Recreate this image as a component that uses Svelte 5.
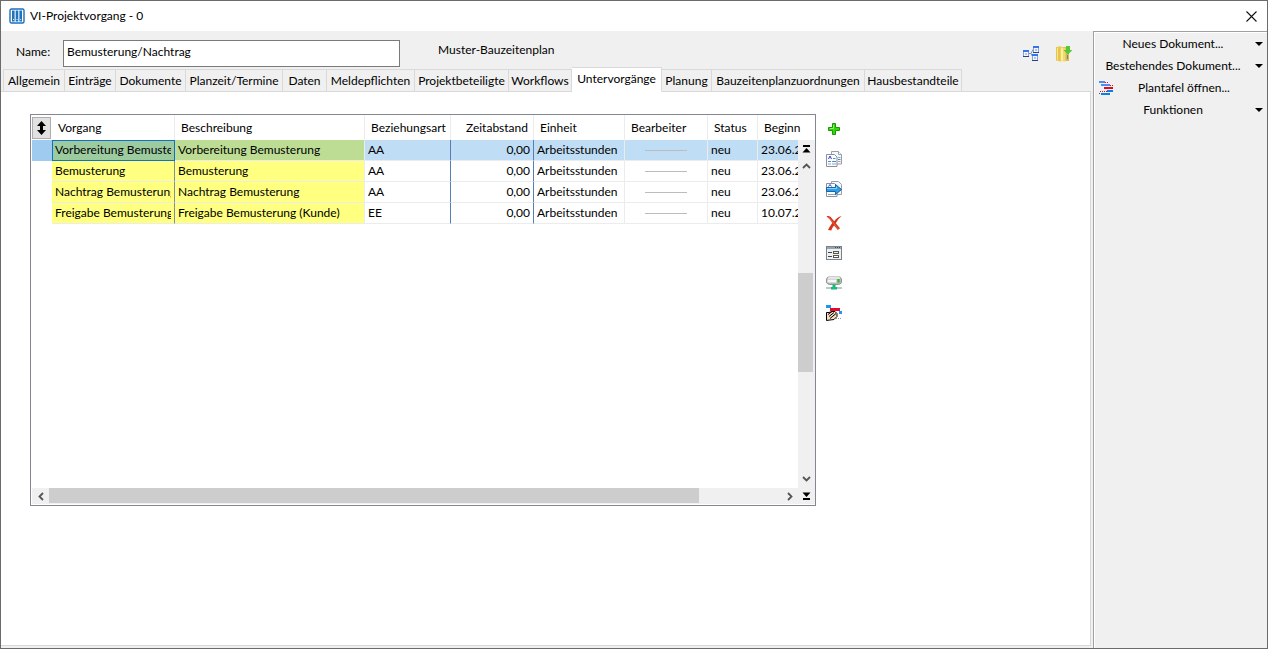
<script lang="ts">
  interface Tab {
    label: string;
    width: number;
  }

  interface Vorgang {
    vorgang: string;
    beschreibung: string;
    art: string;
    abstand: string;
    einheit: string;
    status: string;
    beginn: string;
  }

  const tabs: Tab[] = [
    { label: 'Allgemein', width: 62 },
    { label: 'Einträge', width: 51 },
    { label: 'Dokumente', width: 70 },
    { label: 'Planzeit/Termine', width: 97 },
    { label: 'Daten', width: 44 },
    { label: 'Meldepflichten', width: 88 },
    { label: 'Projektbeteiligte', width: 94 },
    { label: 'Workflows', width: 63 },
    { label: 'Untervorgänge', width: 90 },
    { label: 'Planung', width: 50 },
    { label: 'Bauzeitenplanzuordnungen', width: 153 },
    { label: 'Hausbestandteile', width: 97 },
  ];

  const rows: Vorgang[] = [
    { vorgang: 'Vorbereitung Bemusterung', beschreibung: 'Vorbereitung Bemusterung', art: 'AA', abstand: '0,00', einheit: 'Arbeitsstunden', status: 'neu', beginn: '23.06.2020' },
    { vorgang: 'Bemusterung', beschreibung: 'Bemusterung', art: 'AA', abstand: '0,00', einheit: 'Arbeitsstunden', status: 'neu', beginn: '23.06.2020' },
    { vorgang: 'Nachtrag Bemusterung', beschreibung: 'Nachtrag Bemusterung', art: 'AA', abstand: '0,00', einheit: 'Arbeitsstunden', status: 'neu', beginn: '23.06.2020' },
    { vorgang: 'Freigabe Bemusterung', beschreibung: 'Freigabe Bemusterung (Kunde)', art: 'EE', abstand: '0,00', einheit: 'Arbeitsstunden', status: 'neu', beginn: '10.07.2020' },
  ];

  let name = $state('Bemusterung/Nachtrag');
  let activeTab = $state('Untervorgänge');
  let selected = $state(0);
</script>

<div class="window">
  <header class="titlebar">
    <svg width="16" height="16" viewBox="0 0 16 16">
      <rect x="1" y="1" width="14" height="14" rx="1.5" fill="#fff" stroke="#1c6fb8" stroke-width="1.4" />
      <path d="M3 2.5h2.6v11H3zM6.7 2.5h2.6v11H6.7zM10.4 2.5H13v11h-2.600z" fill="#1c75bc" />
      <path d="M4 11h.8v1H4zM7.600 11h.8v1h-.8zM11.300 11h.8v1h-.8z" fill="#fff" />
    </svg>
    <h1>VI-Projektvorgang - 0</h1>
    <button class="close" aria-label="Schließen">
      <svg width="11" height="11" viewBox="0 0 11 11"><path d="M.5.5l10 10M10.500.5l-10 10" stroke="#111" stroke-width="1.100" /></svg>
    </button>
  </header>

  <div class="content">
    <main>
      <div class="head">
        <label for="name">Name:</label>
        <input id="name" type="text" bind:value={name} />
        <span class="plan">Muster-Bauzeitenplan</span>
        <div class="head-actions">
          <button aria-label="Struktur">
            <svg width="16" height="16" viewBox="0 0 16 16">
              <path d="M5 7.500h3M8 7.500l2-4M8 7.500l2 4" stroke="#7d93bd" fill="none" />
              {#each [[0, 4], [10, 0], [9, 8]] as [x, y] (y)}
                <rect x={x + 0.5} y={y + 0.5} width="5" height="6" fill="#f2f6ff" stroke="#7fa0e4" />
                <path d="M{x} {y + 1}h6" stroke="#3a72e8" stroke-width="2" />
                <path d="M{x} {y + 6.5}h6" stroke="#2c4474" />
                <path d="M{x + 2} {y + 4}h2" stroke="#6f90dc" />
              {/each}
            </svg>
          </button>
          <button aria-label="Ablegen">
            <svg width="16" height="16" viewBox="0 0 16 16">
              <path d="M0 1l5-.8V15.500l-5-1z" fill="#e6c648" />
              <path d="M1.500 1.500v12.500" stroke="#f8e690" />
              <path d="M5 1h8v14H5z" fill="#e0bb3e" />
              <path d="M4.500 1l5 1v13.500l-5-.5z" fill="#f1d96f" />
              <path d="M6 2.500v12" stroke="#fff3b8" stroke-width="1.500" />
              <path d="M10 0h4v4h2.500L12 8.500 7.500 4H10z" fill="#55c83a" />
              <path d="M11.500 9v4" stroke="#3f91b8" />
            </svg>
          </button>
        </div>
      </div>

      <div class="tabs" role="tablist">
        {#each tabs as tab (tab.label)}
          <button
            role="tab"
            class="tab"
            class:active={tab.label === activeTab}
            aria-selected={tab.label === activeTab}
            style:width="{tab.width}px"
            onclick={() => (activeTab = tab.label)}
          >{tab.label}</button>
        {/each}
      </div>

      <section class="panel">
        <div class="grid">
          <table>
            <colgroup>
              <col class="c-sel" />
              <col class="c-vorgang" />
              <col class="c-beschreibung" />
              <col class="c-art" />
              <col class="c-abstand" />
              <col class="c-einheit" />
              <col class="c-bearbeiter" />
              <col class="c-status" />
              <col />
            </colgroup>
            <thead>
              <tr>
                <th class="sel">
                  <button class="sort" aria-label="Sortieren">
                    <svg width="9" height="14" viewBox="0 0 9 14"><path d="M4.500 0L9 5H6v4h3l-4.500 5L0 9h3V5H0z" fill="#000" /></svg>
                  </button>
                </th>
                <th>Vorgang</th>
                <th>Beschreibung</th>
                <th>Beziehungsart</th>
                <th class="num">Zeitabstand</th>
                <th>Einheit</th>
                <th>Bearbeiter</th>
                <th>Status</th>
                <th>Beginn</th>
              </tr>
            </thead>
            <tbody>
              {#each rows as row, i (i)}
                <tr class:selected={i === selected} onclick={() => (selected = i)}>
                  <td class="sel"></td>
                  <td class="key"><div class="clip">{row.vorgang}</div></td>
                  <td class="desc">{row.beschreibung}</td>
                  <td class="art">{row.art}</td>
                  <td class="num">{row.abstand}</td>
                  <td>{row.einheit}</td>
                  <td><div class="nobody"></div></td>
                  <td>{row.status}</td>
                  <td>{row.beginn}</td>
                </tr>
              {/each}
            </tbody>
          </table>

          <div class="vscroll">
            <button aria-label="Zum Anfang">
              <svg width="9" height="8" viewBox="0 0 9 8"><path d="M1 0h7v2H1zM4.500 3L8.500 7.500h-8z" fill="#000" /></svg>
            </button>
            <button aria-label="Nach oben">
              <svg width="9" height="6" viewBox="0 0 9 6"><path d="M1 5l3.500-3.500L8 5" fill="none" stroke="#555" stroke-width="1.800" /></svg>
            </button>
            <div class="track"><div class="thumb"></div></div>
            <button aria-label="Nach unten">
              <svg width="9" height="6" viewBox="0 0 9 6"><path d="M1 1l3.500 3.500L8 1" fill="none" stroke="#555" stroke-width="1.800" /></svg>
            </button>
            <button aria-label="Zum Ende">
              <svg width="9" height="8" viewBox="0 0 9 8"><path d="M1 6h7v2H1zM.5.5h8L4.500 5z" fill="#000" /></svg>
            </button>
          </div>

          <div class="hscroll">
            <button aria-label="Nach links">
              <svg width="6" height="9" viewBox="0 0 6 9"><path d="M5 1L1.500 4.500 5 8" fill="none" stroke="#555" stroke-width="1.800" /></svg>
            </button>
            <div class="track"><div class="thumb"></div></div>
            <button aria-label="Nach rechts">
              <svg width="6" height="9" viewBox="0 0 6 9"><path d="M1 1l3.500 3.500L1 8" fill="none" stroke="#555" stroke-width="1.800" /></svg>
            </button>
          </div>
        </div>

        <div class="tools">
          <div class="tool-group">
            <button aria-label="Neu">
              <svg width="16" height="16" viewBox="0 0 16 16">
                <path d="M6.500 2.500h3v4h4v3h-4v4h-3v-4h-4v-3h4z" fill="#35d60c" stroke="#159a00" stroke-linejoin="round" />
                <path d="M7.500 4v3.500H4" stroke="#8cf06a" fill="none" />
              </svg>
            </button>
            <button aria-label="Kopieren">
              <svg width="16" height="16" viewBox="0 0 16 16">
                <path d="M5.500.5h7l3 3v9.500h-10z" fill="#f4f7fb" stroke="#9a9ea6" />
                <path d="M12.500.5v3h3" fill="#fff" stroke="#9a9ea6" />
                <path d="M.5 3.500h8l2.500 2.500v9.500H.5z" fill="#fbfcfe" stroke="#8d9199" />
                <path d="M2.500 8l1.500-3 1.500 3" fill="none" stroke="#3838c8" />
                <path d="M7 7.500h2.500M2 10.500h3M6 10.500h4" stroke="#4f8fd0" />
                <path d="M2 13h3M6 13h4M12 6.500h2.500M12 10.500h2.500" stroke="#9aa7b4" />
                <path d="M12 8.500h2.500" stroke="#3f8ac8" />
              </svg>
            </button>
            <button aria-label="Kopieren nach">
              <svg width="16" height="16" viewBox="0 0 16 16">
                <path d="M5.500.5h7l3 3v10h-10z" fill="#f4f7fb" stroke="#9a9ea6" />
                <path d="M.5 2.500h8l2.500 2.500v10.500H.5z" fill="#fbfcfe" stroke="#8d9199" />
                <path d="M2.500 5.500L4 3.500l1.500 2" fill="none" stroke="#3838c8" />
                <path d="M2 13.500h8" stroke="#8fa5b8" />
                <path d="M.5 6.500h9v-3l6 5-6 5v-3h-9z" fill="#2f9fe8" stroke="#1565a8" />
                <path d="M1 7.500h9.500v-2" fill="none" stroke="#8fd2fa" />
              </svg>
            </button>
          </div>
          <div class="tool-group">
            <button aria-label="Löschen">
              <svg width="16" height="16" viewBox="0 0 16 16">
                <path d="M.5 1.500c2.500-1.200 4 0 5.200 1.700L8.200 6.300C10 4 12.500 1.800 15.700 1 12.800 3.300 11.200 5.800 9.800 8.300l4.200 5-2.200 1.700L8 10.500c-1.300 1.800-2.200 3.200-2.800 5L2 15C3 12.500 4.700 10 6.200 7.900 4.500 5.500 2.800 3 .5 1.500z" fill="#d6341a" />
                <path d="M2.500 2l9.800 12" stroke="#f07a5c" stroke-width=".7" />
              </svg>
            </button>
            <button aria-label="Formular">
              <svg width="16" height="16" viewBox="0 0 16 16">
                <rect x=".5" y="1.500" width="15" height="13" fill="#eef1f3" stroke="#7a838a" />
                <path d="M1 3h14" stroke="#9aa4ac" stroke-width="2" />
                <path d="M9 2.500h1M11 2.500h1M13 2.500h1" stroke="#445" />
                <path d="M2 7.500h4M2 11.500h4" stroke="#444" />
                <rect x="7.500" y="6.500" width="5" height="2" fill="#fdf7b0" stroke="#555" />
                <rect x="7.500" y="10.500" width="5" height="2" fill="#fff" stroke="#555" />
              </svg>
            </button>
            <button aria-label="Server">
              <svg width="16" height="16" viewBox="0 0 16 16">
                <path d="M2 2h12l1.500 2v3.500q-1 2-3 2h-9q-2 0-3-2V4z" fill="#b4b8bb" stroke="#777" stroke-width=".7" />
                <path d="M2.500 2h11l1 2h-13z" fill="#e3e5e6" />
                <rect x="1.500" y="4.500" width="9" height="3" fill="#f5f6f6" />
                <path d="M12.500 4v3.500" stroke="#29b817" stroke-width="2" />
                <path d="M8 9.500v4" stroke="#16b878" stroke-width="3" />
                <path d="M5 12h6v2.500H5z" fill="#13bd7c" />
                <path d="M0 13h5M11 13h5" stroke="#bcc9c4" stroke-width="2" />
              </svg>
            </button>
            <button aria-label="Planen">
              <svg width="16" height="16" viewBox="0 0 16 16">
                <path d="M0 0h5v3H0zM13 6h3v3h-3z" fill="#1c97f5" />
                <path d="M4 3h10v3H4z" fill="#e40a2c" />
                <path d="M.5 7.500H3l3-1h3l2 2v3l-3 3-4 .5-3.500.5z" fill="#f6dcc0" stroke="#000" stroke-linejoin="round" />
                <path d="M2 9.500l4-3M3 11.500l5-4M4 13.500l6-5" stroke="#000" fill="none" />
                <path d="M10 13.500h6" stroke="#999" stroke-dasharray="1 1" />
              </svg>
            </button>
          </div>
        </div>
      </section>
    </main>

    <nav class="menu">
      <button><span>Neues Dokument...</span><i class="caret"></i></button>
      <button><span>Bestehendes Dokument...</span><i class="caret"></i></button>
      <button class="with-icon">
        <svg width="14" height="14" viewBox="0 0 14 14">
          <path d="M0 0h6v2H0zM2 3h9v2H2z" fill="#4a8df5" />
          <path d="M5 6h9v2H5z" fill="#e00b17" />
          <path d="M8 9h6v2H8zM2 12h9v2H2z" fill="#0a7fe8" />
          <path d="M6 1.500h3M11 4.500h3M1 10.500h7M0 12.500h1" stroke="#e00b17" stroke-dasharray="1 1" />
        </svg>
        <span>Plantafel öffnen...</span>
      </button>
      <button><span>Funktionen</span><i class="caret"></i></button>
    </nav>
  </div>
</div>

<style>
  :global(body) {
    margin: 0;
    background: #f0f0f0;
  }

  .window {
    box-sizing: border-box;
    min-height: 100vh;
    display: flex;
    flex-direction: column;
    border: 1px solid #6b6b6b;
    background: #f0f0f0;
    color: #000;
    font: 12px/16px Lato, 'Open Sans', sans-serif;
  }

  button,
  input {
    font: inherit;
    color: inherit;
  }

  button {
    display: flex;
    align-items: center;
    justify-content: center;
    padding: 0;
    border: 0;
    background: none;
  }

  svg {
    display: block;
    flex: none;
  }

  /* Title bar */
  .titlebar {
    display: flex;
    align-items: center;
    gap: 5px;
    height: 30px;
    padding: 0 8px;
    background: #fff;
  }

  h1 {
    flex: 1;
    margin: 0;
    font-size: 12px;
    font-weight: 400;
  }

  .close {
    width: 16px;
    height: 16px;
  }

  .content {
    flex: 1;
    display: flex;
  }

  main {
    flex: 1;
    min-width: 0;
    display: flex;
    flex-direction: column;
    padding: 0 2px 2px 0;
  }

  /* Name row */
  .head {
    display: flex;
    align-items: center;
    height: 27px;
    padding: 9px 19px 0 15px;
  }

  .head label {
    width: 47px;
    padding-bottom: 4px;
  }

  .head input {
    box-sizing: border-box;
    width: 337px;
    height: 27px;
    padding: 0 3px 4px;
    border: 1px solid #7a7a7a;
    background: #fff;
  }

  .plan {
    flex: 1;
    padding: 0 0 7px 38px;
  }

  .head-actions {
    display: flex;
    gap: 17px;
  }

  /* Tabs, the open one covers the panel's top line */
  .tabs {
    z-index: 1;
    display: flex;
    align-items: flex-end;
    height: 25px;
    margin-bottom: -1px;
    padding-left: 2px;
  }

  .tab {
    box-sizing: border-box;
    flex: none;
    height: 23px;
    border: 1px solid #d9d9d9;
    border-left: 0;
    white-space: nowrap;
  }

  .tab:first-child {
    border-left: 1px solid #d9d9d9;
  }

  .tab.active {
    height: 25px;
    padding-bottom: 2px;
    border-bottom-color: #fff;
    background: #fff;
  }

  .panel {
    flex: 1;
    display: flex;
    align-items: flex-start;
    gap: 10px;
    padding: 22px 20px 20px 29px;
    border: solid #d9d9d9;
    border-width: 1px 1px 1px 0;
    background: #fff;
  }

  /* Grid */
  .grid {
    position: relative;
    box-sizing: border-box;
    flex: 0 1 786px;
    height: 392px;
    padding-left: 1px;
    border: 1px solid #828790;
    overflow: hidden;
  }

  table {
    width: 100%;
    table-layout: fixed;
    border-collapse: separate;
    border-spacing: 0;
  }

  .c-sel { width: 20px; }
  .c-vorgang { width: 123px; }
  .c-beschreibung { width: 190px; }
  .c-art { width: 86px; }
  .c-abstand { width: 83px; }
  .c-einheit { width: 91px; }
  .c-bearbeiter { width: 83px; }
  .c-status { width: 50px; }

  th,
  td {
    box-sizing: border-box;
    padding: 0 3px;
    border-right: 1px solid #ececec;
    overflow: hidden;
    text-align: left;
    font-weight: 400;
    white-space: nowrap;
  }

  th {
    height: 25px;
    padding: 0 5px 0 6px;
  }

  th:last-child,
  td:last-child {
    border-right: 0;
  }

  td {
    height: 21px;
    border-bottom: 1px solid #ececec;
  }

  .sel {
    padding: 0;
    border-right: 0;
  }

  td.sel {
    border-bottom-color: transparent;
  }

  th.num,
  td.num {
    text-align: right;
  }

  td.num,
  td.art {
    border-right-color: #5b7db5;
  }

  td.key,
  td.desc {
    background: #ffff80;
  }

  td.key {
    border-right-color: #8090a0;
  }

  .clip {
    overflow: hidden;
  }

  .selected td {
    background: #bfddf5;
  }

  .selected td.sel {
    background: #9ecbef;
  }

  .selected td.key {
    background: #9ccba0;
    outline: 1px solid #0f72c8;
    outline-offset: -1px;
  }

  .selected td.desc {
    background: #bddd94;
  }

  .sort {
    box-sizing: border-box;
    width: 19px;
    height: 22px;
    border: 1px solid #adadad;
    background: #e1e1e1;
  }

  .nobody {
    width: 42px;
    height: 1px;
    margin: 0 auto;
    background: #bcbcbc;
  }

  /* Scrollbars lie over the grid's right and bottom edge */
  .vscroll,
  .hscroll {
    position: absolute;
    display: flex;
    background: #f0f0f0;
  }

  .vscroll {
    top: 25px;
    right: 0;
    bottom: 1px;
    width: 17px;
    flex-direction: column;
  }

  .vscroll button {
    height: 17px;
  }

  .hscroll {
    left: 1px;
    right: 17px;
    bottom: 1px;
    height: 16px;
  }

  .hscroll button {
    width: 17px;
  }

  .track {
    flex: 1;
  }

  .thumb {
    background: #cdcdcd;
  }

  .vscroll .thumb {
    width: 15px;
    height: 99px;
    margin-top: 99px;
  }

  .hscroll .thumb {
    width: 650px;
    height: 15px;
  }

  /* Tool column */
  .tools {
    display: flex;
    flex-direction: column;
    gap: 18px;
    padding-top: 7px;
  }

  .tool-group {
    display: flex;
    flex-direction: column;
    gap: 14px;
  }

  /* Side menu */
  .menu {
    box-sizing: border-box;
    width: 174px;
    padding-top: 1px;
    border: solid #a0a0a0;
    border-width: 1px 0 0 1px;
    box-shadow: inset 1px 1px #fff;
  }

  .menu button {
    width: 100%;
    height: 22px;
    padding: 0 4px 0 5px;
  }

  .menu span {
    flex: 1;
    text-align: center;
  }

  .with-icon span {
    padding-right: 8px;
  }

  .menu .caret {
    width: 0;
    margin-left: 8px;
    border: 4px solid transparent;
    border-top-color: #000;
    border-bottom: 0;
  }
</style>
